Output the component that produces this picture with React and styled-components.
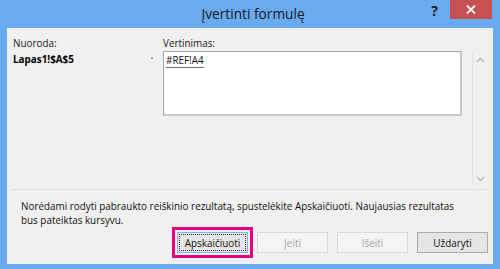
import React from "react";
import styled, { createGlobalStyle } from "styled-components";

const GlobalStyle = createGlobalStyle`
  html, body {
    margin: 0;
    padding: 0;
    background: #ffffff;
  }
  body {
    font-family: "Open Sans", "Noto Sans", sans-serif;
  }
`;

const Window = styled.div`
  width: 500px;
  height: 269px;
  background: #6aaaf0;
  display: flex;
  flex-direction: column;
  box-sizing: border-box;
  padding: 0 7px 5px 7px;
`;

const TitleBar = styled.div`
  height: 28px;
  flex: none;
  display: flex;
  align-items: flex-start;
  position: relative;
`;

const Title = styled.div`
  flex: 1;
  text-align: center;
  font-size: 13.7px;
  line-height: 28px;
  color: #1b1b1b;
  padding-left: 6px;
`;

const HelpButton = styled.div`
  position: absolute;
  right: 55px;
  top: 2px;
  font-size: 14px;
  font-weight: 700;
  color: #1e1e1e;
  line-height: 18px;
`;

const CloseButton = styled.div`
  position: absolute;
  right: 1px;
  top: 0;
  width: 42px;
  height: 19px;
  background: #c75050;
  display: flex;
  align-items: center;
  justify-content: center;
`;

const Client = styled.div`
  flex: 1;
  background: #f0f0f0;
  display: flex;
  flex-direction: column;
  font-size: 9.9px;
  color: #000;
`;

const Upper = styled.div`
  display: flex;
  height: 161px;
  padding: 8px 0 0 6px;
  box-sizing: border-box;
`;

const RefColumn = styled.div`
  width: 134px;
  display: flex;
  flex-direction: column;
  gap: 2px;
`;

const Label = styled.div`
  line-height: 14px;
  color: #202020;
`;

const RefValue = styled.div`
  line-height: 14px;
  font-weight: 700;
`;

const Marker = styled.div`
  width: 16px;
  padding: 21px 0 0 4px;
  box-sizing: border-box;
  display: flex;
  & span {
    width: 2px;
    height: 2px;
    background: #a8a8a8;
  }
`;

const EvalColumn = styled.div`
  width: 299px;
  display: flex;
  flex-direction: column;
  gap: 1px;
`;

const EvalBox = styled.div`
  height: 65px;
  box-sizing: border-box;
  background: #ffffff;
  border: 1px solid #a5a5a5;
  border-right-width: 2px;
  border-bottom-width: 2px;
  border-right-color: #c8c8c8;
  border-bottom-color: #c8c8c8;
  padding: 1px 2px;
`;

const Expression = styled.span`
  line-height: 14px;
  border-bottom: 1px solid #707070;
  color: #111;
`;

const ScrollTrack = styled.div`
  margin-left: 10px;
  margin-top: 16px;
  height: 134px;
  width: 16px;
  border-left: 1px solid #e2e2e2;
  display: flex;
  flex-direction: column;
  justify-content: space-between;
  align-items: center;
  padding: 5px 0 4px 0;
  box-sizing: border-box;
`;

const Separator = styled.div`
  height: 1px;
  background: #dcdcdc;
  margin: 0 5px 0 5px;
`;

const Note = styled.div`
  padding: 9px 0 0 14px;
  line-height: 14px;
  color: #111;
`;

const ButtonRow = styled.div`
  display: flex;
  justify-content: flex-end;
  gap: 9px;
  padding: 5px 5px 0 0;
`;

const Highlight = styled.div`
  border: 3px solid #e6007e;
  padding: 2px;
  margin: -5px -5px 0 0;
  display: flex;
`;

const Button = styled.div`
  width: 71px;
  height: 21px;
  box-sizing: border-box;
  border: 1px solid ${(p) => (p.$disabled ? "#d9d9d9" : p.$focused ? "#7eb4ea" : "#acacac")};
  background: ${(p) => (p.$disabled ? "#f4f4f4" : "#e5e5e5")};
  color: ${(p) => (p.$disabled ? "#a3a3a3" : "#111")};
  display: flex;
  align-items: center;
  justify-content: center;
  padding: 1px;
`;

const FocusRing = styled.div`
  flex: 1;
  align-self: stretch;
  border: 1px dotted #333;
  display: flex;
  align-items: center;
  justify-content: center;
`;

const Chevron = ({ down }) => (
  <svg width="9" height="6" viewBox="0 0 9 6">
    <path
      d={down ? "M1 1 L4.5 4.5 L8 1" : "M1 5 L4.5 1.5 L8 5"}
      fill="none"
      stroke="#b5b5b5"
      strokeWidth="1.3"
    />
  </svg>
);

const App = () => {
  return (
    <>
      <GlobalStyle />
      <Window>
        <TitleBar>
          <Title>Įvertinti formulę</Title>
          <HelpButton>?</HelpButton>
          <CloseButton>
            <svg width="10" height="9" viewBox="0 0 10 9">
              <path d="M1 0.5 L9 8.5 M9 0.5 L1 8.5" stroke="#ffffff" strokeWidth="1.8" />
            </svg>
          </CloseButton>
        </TitleBar>
        <Client>
          <Upper>
            <RefColumn>
              <Label>Nuoroda:</Label>
              <RefValue>Lapas1!$A$5</RefValue>
            </RefColumn>
            <Marker>
              <span />
            </Marker>
            <EvalColumn>
              <Label>Vertinimas:</Label>
              <EvalBox>
                <Expression>#REF!A4</Expression>
              </EvalBox>
            </EvalColumn>
            <ScrollTrack>
              <Chevron />
              <Chevron down />
            </ScrollTrack>
          </Upper>
          <Separator />
          <Note>
            Norėdami rodyti pabraukto reiškinio rezultatą, spustelėkite Apskaičiuoti. Naujausias rezultatas
            <br />
            bus pateiktas kursyvu.
          </Note>
          <ButtonRow>
            <Highlight>
              <Button $focused>
                <FocusRing>Apskaičiuoti</FocusRing>
              </Button>
            </Highlight>
            <Button $disabled>Įeiti</Button>
            <Button $disabled>Išeiti</Button>
            <Button>Uždaryti</Button>
          </ButtonRow>
        </Client>
      </Window>
    </>
  );
};

export default App;
